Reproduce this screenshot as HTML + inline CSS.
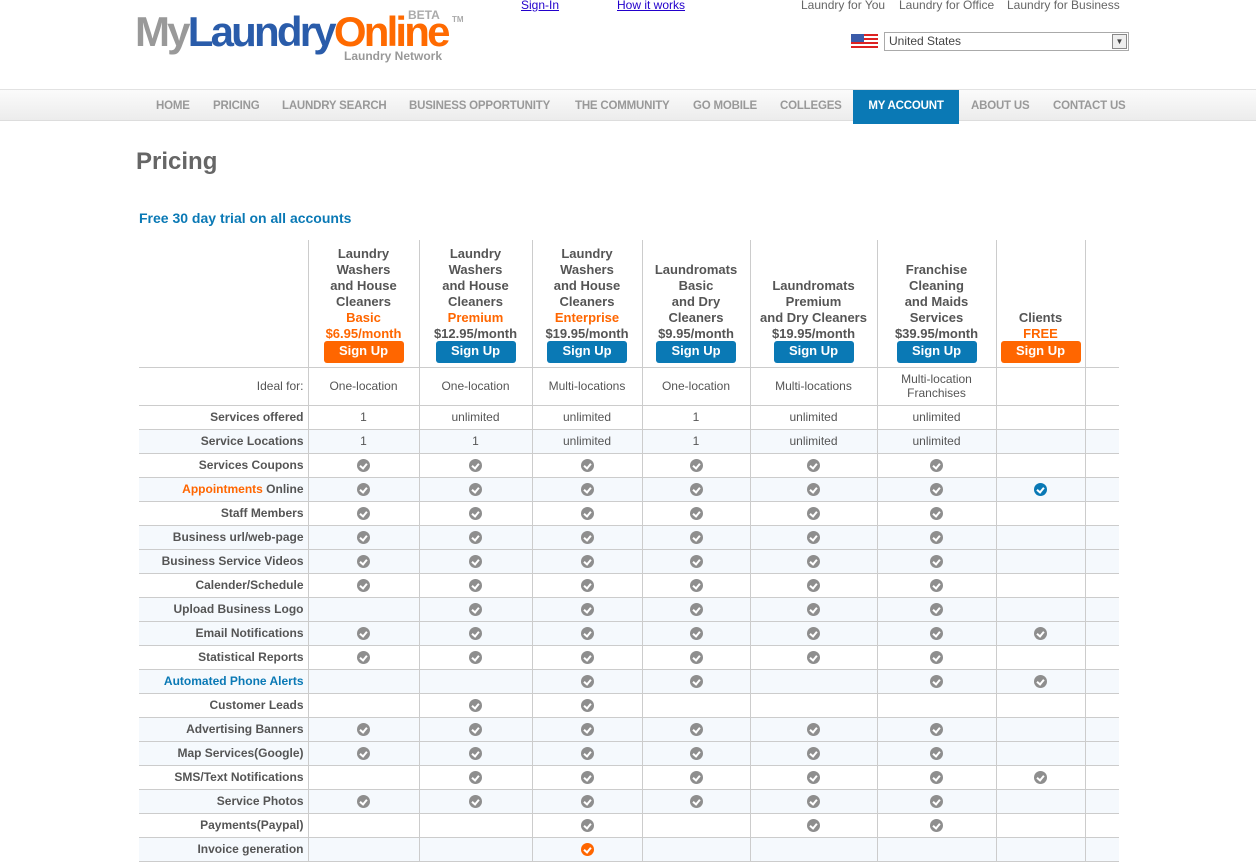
<!DOCTYPE html>
<html><head><meta charset="utf-8">
<style>
*{margin:0;padding:0;box-sizing:border-box}
body{width:1256px;height:854px;overflow:hidden;background:#fff;font-family:"Liberation Sans",Arial,sans-serif;position:relative;color:#555}
.abs{position:absolute}
.logo{left:135px;top:8px;font-weight:bold;font-size:42px;letter-spacing:-2.8px;line-height:48px;white-space:nowrap}
.toplinks a{position:absolute;top:-2px;font-size:12px;color:#2200cc;text-decoration:underline}
.rl{position:absolute;top:-2px;font-size:12px;color:#666}
.nav{left:0;top:89px;width:1256px;height:32px;background:linear-gradient(#fbfbfb,#ececec);border-top:1px solid #e2e2e2;border-bottom:1px solid #ddd}
.nav span{position:absolute;top:10px;font-size:11.5px;font-weight:bold;color:#999;white-space:nowrap;letter-spacing:-0.2px}
.nav .act{top:0;height:34px;background:#0a79b5;color:#fff;padding:10px 0 0;text-align:center}
table{position:absolute;left:139px;top:240px;border-collapse:collapse;table-layout:fixed;width:980px}
td{border:1px solid #ccc;font-size:12px;text-align:center;height:24px;padding:0;color:#555}
tr td:first-child{border-left:none;text-align:right;padding-right:4px;font-weight:bold}
tr:first-child td{border-top:none}
tr:first-child td:first-child{border-bottom:1px solid #ccc}
tr td:last-child{border-right:none}
.h td{vertical-align:bottom;font-weight:bold;font-size:13px;line-height:16px;height:127px;padding-bottom:4px;color:#555}
.o{color:#ff6600}
.btn{display:block;margin:-1px auto 0;width:80px;height:22px;border-radius:3px;background:#0a79b5;color:#fff;font-size:13px;line-height:20px}
.btn.or{background:#ff6600}
.b td{background:#f5f9fd}
.c{display:inline-block;width:13px;height:13px;border-radius:50%;background:#8e8e8e;position:relative;vertical-align:middle}
.c::after{content:"";position:absolute;left:4px;top:2.5px;width:3px;height:5px;border:solid #fff;border-width:0 2px 2px 0;transform:rotate(40deg)}
.c.bl{background:#0a79b5}.c.og{background:#ff6600}
</style></head><body>
<div class="abs logo"><span style="color:#999">My</span><span style="color:#2a5caa">Laundry</span><span style="color:#ff6a00">Online</span></div>
<div class="abs" style="left:408px;top:8px;font-size:12px;font-weight:bold;color:#aaa">BETA</div>
<div class="abs" style="left:452px;top:15px;font-size:8px;font-weight:bold;color:#aaa">TM</div>
<div class="abs" style="left:344px;top:49px;font-size:12px;font-weight:bold;color:#999">Laundry Network</div>
<div class="toplinks"><a style="left:521px">Sign-In</a><a style="left:617px">How it works</a></div>
<div class="rl" style="left:801px">Laundry for You</div>
<div class="rl" style="left:899px">Laundry for Office</div>
<div class="rl" style="left:1007px">Laundry for Business</div>
<div class="abs" style="left:851px;top:34px;width:27px;height:15px;background:repeating-linear-gradient(#d22 0 2px,#fff 2px 4px)"><div style="width:13px;height:8px;background:#3b5ba9"></div></div>
<div class="abs" style="left:884px;top:32px;width:245px;height:19px;border:1px solid #aaa;font-size:12px;line-height:17px;padding-left:4px;color:#444">United States<div style="position:absolute;right:1px;top:1px;width:15px;height:15px;border:1px solid #888;background:#eee;font-size:8px;text-align:center;line-height:14px">▼</div></div>
<div class="abs nav">
<span style="left:156px">HOME</span><span style="left:213px">PRICING</span><span style="left:282px">LAUNDRY SEARCH</span><span style="left:409px">BUSINESS OPPORTUNITY</span><span style="left:575px">THE COMMUNITY</span><span style="left:693px">GO MOBILE</span><span style="left:780px">COLLEGES</span><span class="act" style="left:853px;width:106px">MY ACCOUNT</span><span style="left:971px">ABOUT US</span><span style="left:1053px">CONTACT US</span>
</div>
<div class="abs" style="left:136px;top:148px;font-size:24px;font-weight:bold;color:#666">Pricing</div>
<div class="abs" style="left:139px;top:210px;font-size:14px;font-weight:bold;color:#0a79b5">Free 30 day trial on all accounts</div>
<table>
<colgroup><col style="width:169px"><col style="width:111px"><col style="width:113px"><col style="width:110px"><col style="width:108px"><col style="width:127px"><col style="width:119px"><col style="width:89px"><col style="width:34px"></colgroup>
<tr class="h"><td></td>
<td>Laundry<br>Washers<br>and House<br>Cleaners<br><span class="o">Basic<br>$6.95/month</span><span class="btn or">Sign Up</span></td>
<td>Laundry<br>Washers<br>and House<br>Cleaners<br><span class="o">Premium</span><br>$12.95/month<span class="btn">Sign Up</span></td>
<td>Laundry<br>Washers<br>and House<br>Cleaners<br><span class="o">Enterprise</span><br>$19.95/month<span class="btn">Sign Up</span></td>
<td>Laundromats<br>Basic<br>and Dry<br>Cleaners<br>$9.95/month<span class="btn">Sign Up</span></td>
<td>Laundromats<br>Premium<br>and Dry Cleaners<br>$19.95/month<span class="btn">Sign Up</span></td>
<td>Franchise<br>Cleaning<br>and Maids<br>Services<br>$39.95/month<span class="btn">Sign Up</span></td>
<td>Clients<br><span class="o">FREE</span><span class="btn or">Sign Up</span></td><td></td></tr>
<tr><td style="height:38px;font-weight:normal">Ideal for:</td><td>One-location</td><td>One-location</td><td>Multi-locations</td><td>One-location</td><td>Multi-locations</td><td>Multi-location<br>Franchises</td><td></td><td></td></tr>
<tr><td>Services offered</td><td>1</td><td>unlimited</td><td>unlimited</td><td>1</td><td>unlimited</td><td>unlimited</td><td></td><td></td></tr>
<tr class="b"><td>Service Locations</td><td>1</td><td>1</td><td>unlimited</td><td>1</td><td>unlimited</td><td>unlimited</td><td></td><td></td></tr>
<tr><td>Services Coupons</td><td><i class="c"></i></td><td><i class="c"></i></td><td><i class="c"></i></td><td><i class="c"></i></td><td><i class="c"></i></td><td><i class="c"></i></td><td></td><td></td></tr>
<tr class="b"><td><span class="o">Appointments</span> Online</td><td><i class="c"></i></td><td><i class="c"></i></td><td><i class="c"></i></td><td><i class="c"></i></td><td><i class="c"></i></td><td><i class="c"></i></td><td><i class="c bl"></i></td><td></td></tr>
<tr><td>Staff Members</td><td><i class="c"></i></td><td><i class="c"></i></td><td><i class="c"></i></td><td><i class="c"></i></td><td><i class="c"></i></td><td><i class="c"></i></td><td></td><td></td></tr>
<tr class="b"><td>Business url/web-page</td><td><i class="c"></i></td><td><i class="c"></i></td><td><i class="c"></i></td><td><i class="c"></i></td><td><i class="c"></i></td><td><i class="c"></i></td><td></td><td></td></tr>
<tr class="b"><td>Business Service Videos</td><td><i class="c"></i></td><td><i class="c"></i></td><td><i class="c"></i></td><td><i class="c"></i></td><td><i class="c"></i></td><td><i class="c"></i></td><td></td><td></td></tr>
<tr><td>Calender/Schedule</td><td><i class="c"></i></td><td><i class="c"></i></td><td><i class="c"></i></td><td><i class="c"></i></td><td><i class="c"></i></td><td><i class="c"></i></td><td></td><td></td></tr>
<tr class="b"><td>Upload Business Logo</td><td></td><td><i class="c"></i></td><td><i class="c"></i></td><td><i class="c"></i></td><td><i class="c"></i></td><td><i class="c"></i></td><td></td><td></td></tr>
<tr class="b"><td>Email Notifications</td><td><i class="c"></i></td><td><i class="c"></i></td><td><i class="c"></i></td><td><i class="c"></i></td><td><i class="c"></i></td><td><i class="c"></i></td><td><i class="c"></i></td><td></td></tr>
<tr><td>Statistical Reports</td><td><i class="c"></i></td><td><i class="c"></i></td><td><i class="c"></i></td><td><i class="c"></i></td><td><i class="c"></i></td><td><i class="c"></i></td><td></td><td></td></tr>
<tr class="b"><td style="color:#0a79b5">Automated Phone Alerts</td><td></td><td></td><td><i class="c"></i></td><td><i class="c"></i></td><td></td><td><i class="c"></i></td><td><i class="c"></i></td><td></td></tr>
<tr><td>Customer Leads</td><td></td><td><i class="c"></i></td><td><i class="c"></i></td><td></td><td></td><td></td><td></td><td></td></tr>
<tr class="b"><td>Advertising Banners</td><td><i class="c"></i></td><td><i class="c"></i></td><td><i class="c"></i></td><td><i class="c"></i></td><td><i class="c"></i></td><td><i class="c"></i></td><td></td><td></td></tr>
<tr class="b"><td>Map Services(Google)</td><td><i class="c"></i></td><td><i class="c"></i></td><td><i class="c"></i></td><td><i class="c"></i></td><td><i class="c"></i></td><td><i class="c"></i></td><td></td><td></td></tr>
<tr><td>SMS/Text Notifications</td><td></td><td><i class="c"></i></td><td><i class="c"></i></td><td><i class="c"></i></td><td><i class="c"></i></td><td><i class="c"></i></td><td><i class="c"></i></td><td></td></tr>
<tr class="b"><td>Service Photos</td><td><i class="c"></i></td><td><i class="c"></i></td><td><i class="c"></i></td><td><i class="c"></i></td><td><i class="c"></i></td><td><i class="c"></i></td><td></td><td></td></tr>
<tr><td>Payments(Paypal)</td><td></td><td></td><td><i class="c"></i></td><td></td><td><i class="c"></i></td><td><i class="c"></i></td><td></td><td></td></tr>
<tr class="b"><td>Invoice generation</td><td></td><td></td><td><i class="c og"></i></td><td></td><td></td><td></td><td></td><td></td></tr>
</table>
</body></html>
